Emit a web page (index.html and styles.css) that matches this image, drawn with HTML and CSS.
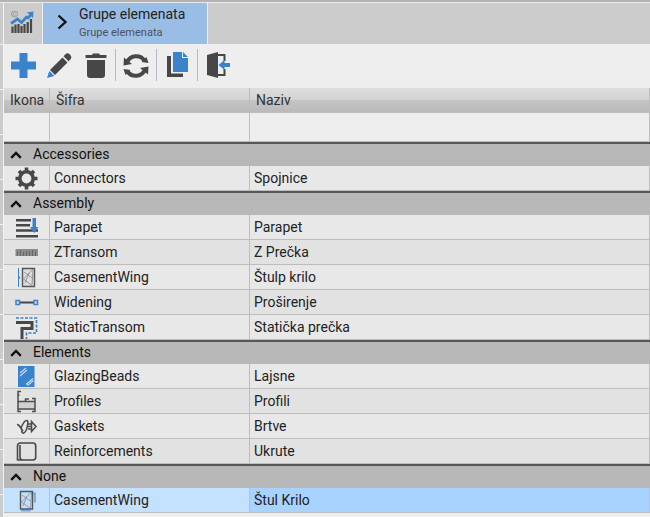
FILE: index.html
```html
<!DOCTYPE html>
<html lang="hr">
<head>
<meta charset="utf-8">
<title>Grupe elemenata</title>
<link rel="stylesheet" href="styles.css">
</head>
<body>
<div class="topline"></div>
<div class="app">
<div class="gutter"></div>
<main class="main">
<nav class="tabs">
<div class="tab home"><svg width="24" height="24" viewBox="0 0 24 24"><circle cx="4.500" cy="3" r="3" fill="none" stroke="#999" stroke-width="1"/><path d="M5.700 2.200a1.400 1.400 0 1 0 0 1.600" fill="none" stroke="#999" stroke-width=".9"/><path d="M2.500 15.500v6.500M5.500 13.500v8.500M8.500 13v9M11.500 15v7M14.500 13v9M17.700 11v11M21 8v14" stroke="#484848" stroke-width="2.200"/><path d="M1 12.500l6.500-4.500 4 3.500 5-5.500 1.500 1 4-4.500" fill="none" stroke="#3c83ca" stroke-width="2.800"/><path d="M17 1.500l6.500-1L23 7z" fill="#3c83ca"/></svg></div>
<div class="tab active"><svg width="11" height="16" viewBox="0 0 11 16"><path d="M1.500 1.500L8.500 8l-7 6.500" fill="none" stroke="#111" stroke-width="2.300"/></svg><div class="labels"><div class="title">Grupe elemenata</div><div class="sub">Grupe elemenata</div></div></div>
</nav>
<div class="toolbar">
<svg class="tool add" width="25" height="25" viewBox="0 0 25 25"><path d="M8.500 0h8v8.500H25v8h-8.500V25h-8v-8.500H0v-8h8.500z" fill="#3983cc"/></svg>
<svg class="tool edit" width="25" height="25" viewBox="0 0 25 25"><path d="M3 17L15.500 4.500l5 5L8 22z" fill="#474747"/><path d="M16.500 3.200l2-2q2-1.700 4 0l1 1q1.500 2 0 4l-2 2z" fill="#474747"/><path d="M2.300 18l5 5L0 25z" fill="#3983cc"/></svg>
<svg class="tool del" width="22" height="25" viewBox="0 0 22 25"><path d="M.5 2H7L8 .5h6L15 2h6.500v3H.5zM2 7h18v15q0 3-3 3H5q-3 0-3-3z" fill="#474747"/></svg>
<i class="sep"></i>
<svg class="tool sync" width="26" height="26" viewBox="0 0 26 26"><path d="M4 9.500A10 10 0 0 1 21.500 7.500M22 16.500A10 10 0 0 1 4.500 18.500" fill="none" stroke="#474747" stroke-width="4"/><path d="M1 4.500L.5 12.500 9 11zM25 21.500l.5-8-8.500 1.500zM18.500 9l5-5 2 6zM7.500 17l-5 5-2-6z" fill="#474747"/></svg>
<i class="sep"></i>
<svg class="tool copy" width="21" height="25" viewBox="0 0 21 25"><path d="M0 4h4v17.500h12V25H0z" fill="#474747"/><path d="M6 0h9v6h6v14H6zM16 0l5 5h-5z" fill="#3983cc"/></svg>
<i class="sep"></i>
<svg class="tool exit" width="23" height="26" viewBox="0 0 23 26"><path d="M0 3L11 0v26L0 23z" fill="#474747"/><path d="M11 3h6.500v6M17.500 17v6H11" fill="none" stroke="#474747" stroke-width="2"/><path d="M11.500 13l6-5v3H23v4h-5.500v3z" fill="#3983cc"/></svg>
</div>
<div class="grid">
<div class="row head"><div>Ikona</div><div>Šifra</div><div>Naziv</div></div>
<div class="row filter"><div></div><div></div><div></div></div>

<div class="group"><svg width="12" height="8" viewBox="0 0 12 8"><path d="M1.200 6.800L6 2l4.800 4.800"/></svg>Accessories</div>
<div class="row"><div><svg width="24" height="24" viewBox="0 0 24 24"><circle cx="11.500" cy="12.500" r="6.700" fill="none" stroke="#474747" stroke-width="3.600"/><path d="M11.500 1.500v4M11.500 19.500v4M.5 12.500h4M18.500 12.500h4M4 5l2.500 2.500M16.500 17.500L19 20M4 20l2.500-2.500M16.500 7.500L19 5" stroke="#474747" stroke-width="3.600"/></svg></div><div>Connectors</div><div>Spojnice</div></div>

<div class="group"><svg width="12" height="8" viewBox="0 0 12 8"><path d="M1.200 6.800L6 2l4.800 4.800"/></svg>Assembly</div>
<div class="row"><div><svg width="24" height="24" viewBox="0 0 24 24"><path d="M1 5.300h15M1 10.300h14M1 15.500h22M1 21.300h22" stroke="#474747" stroke-width="2.600"/><path d="M17.500 3h3.500v9h2.500L19.200 18 15 12h2.500z" fill="#3983cc"/></svg></div><div>Parapet</div><div>Parapet</div></div>
<div class="row alt"><div><svg width="24" height="24" viewBox="0 0 24 24"><path d="M.5 9h22.500v7H.5z" fill="#8b8b8b"/><path d="M2.500 11v5M5.500 10v6M8.500 12v4M11.500 11v5M14.500 11v5M17.500 10v6M20.500 11v5" stroke="#666"/></svg></div><div>ZTransom</div><div>Z Prečka</div></div>
<div class="row"><div><svg width="24" height="24" viewBox="0 0 24 24"><path d="M3.500 3v19" stroke="#3983cc"/><path d="M3 10l2.500 2.500L3 15z" fill="#3983cc"/><path d="M7.500 3.500h12v18h-12z" fill="#ddd" stroke="#555" stroke-width="1.400"/><path d="M18 4L8.500 14l8.500 6.500zM9 7l9 6.500M14 8l-4 10" fill="none" stroke="#888" stroke-width=".8"/></svg></div><div>CasementWing</div><div>Štulp krilo</div></div>
<div class="row alt"><div><svg width="24" height="24" viewBox="0 0 24 24"><path d="M4 12.500h16" stroke="#474747" stroke-width="2"/><path d="M1 10.500h3.500v4H1zM19 10.500h3.500v4H19z" fill="#ddd" stroke="#3983cc" stroke-width="1.500"/></svg></div><div>Widening</div><div>Proširenje</div></div>
<div class="row"><div><svg width="24" height="24" viewBox="0 0 24 24"><path d="M1 3h20.500v15H11.500V24" fill="none" stroke="#3983cc" stroke-width="1.700" stroke-dasharray="3 1.500"/><path d="M1 7.500h16v6H7V24" fill="none" stroke="#474747" stroke-width="3"/></svg></div><div>StaticTransom</div><div>Statička prečka</div></div>

<div class="group"><svg width="12" height="8" viewBox="0 0 12 8"><path d="M1.200 6.800L6 2l4.800 4.800"/></svg>Elements</div>
<div class="row"><div><svg width="24" height="24" viewBox="0 0 24 24"><path d="M3 2h16.500v21H3z" fill="#3983cc"/><path d="M5 9l6-5M5 12l7-6M11 20.500l7-6M12.500 21.500l6-5" stroke="#c8dbed" stroke-width="1.200"/></svg></div><div>GlazingBeads</div><div>Lajsne</div></div>
<div class="row alt"><div><svg width="24" height="24" viewBox="0 0 24 24"><path d="M3 12.500h17v8H3z" fill="#d0d0d0"/><path d="M6 2.500H3V22.500h3M3 6h1.500M17 9.500h3v13h-3M3 12.500h17M3 20h17M10.500 12v-2H14" fill="none" stroke="#4d4d4d" stroke-width="1.500"/></svg></div><div>Profiles</div><div>Profili</div></div>
<div class="row"><div><svg width="24" height="24" viewBox="0 0 24 24"><path d="M2 10.500q2 0 3.500 3L8 17.200" fill="none" stroke="#4d4d4d" stroke-width="1.700"/><path d="M6 14Q9 6.500 11.500 6.500q2 0 1.200 3.500-1 8-4 9-2 .5-2-2.500M13 10h3.500V7.500l4.500 5-4.500 5V15H13M13 12.500h3.500M16.500 10v5" fill="none" stroke="#4d4d4d" stroke-width="1.600"/></svg></div><div>Gaskets</div><div>Brtve</div></div>
<div class="row alt"><div><svg width="24" height="24" viewBox="0 0 24 24"><path d="M2.500 21.500V7q0-3 3-3H18q2.700 0 2.700 2.700V18q0 3-2.700 3H8q-3 0-3-3V6M2.500 21H8" fill="none" stroke="#474747" stroke-width="1.600"/></svg></div><div>Reinforcements</div><div>Ukrute</div></div>

<div class="group"><svg width="12" height="8" viewBox="0 0 12 8"><path d="M1.200 6.800L6 2l4.800 4.800"/></svg>None</div>
<div class="row selected"><div><svg width="24" height="24" viewBox="0 0 24 24"><path d="M18 5.500h1.800v9M6 22.500h9.500" fill="none" stroke="#70aae2" stroke-width="2"/><path d="M5.500 3.500h12v17.500h-12z" fill="#c5dff5" stroke="#555" stroke-width="1.400"/><path d="M16.500 4L6.500 14l9 6.500zM7 7l9 6.500M12 8L8 18" fill="none" stroke="#889" stroke-width=".8"/></svg></div><div>CasementWing</div><div>Štul Krilo</div></div>
</div>
</main>
</div>
</body>
</html>
```

FILE: styles.css
```css
* { box-sizing: border-box; }
body { margin: 0; height: 517px; overflow: hidden; background: #eee; font: 14px/18px Roboto, sans-serif; color: #222; }
svg { display: block; flex: none; }
.topline { height: 3px; background: #b3b3b3; border-bottom: 1px solid #eaeaea; }
.app { display: flex; height: 514px; }
.gutter { width: 4px; border-right: 1px solid #f2f2f2; background: repeating-linear-gradient(#cbcbcb 0 44px, #f2f2f2 44px 45px) 0 -3px / 100% 540px; }
.main { flex: 1; min-width: 0; }
.tabs { display: flex; height: 41px; background: #ccc; }
.tab { display: flex; border-right: 1px solid #eee; }
.home { width: 39px; padding: 8px 0 0 6px; }
.active { width: 165px; background: #9abde5; padding: 2px 0 0 14px; }
.active > svg { margin-top: 9px; }
.labels { margin-left: 11px; white-space: nowrap; }
.title { font-size: 14px; line-height: 19px; }
.sub { font-size: 11px; line-height: 17px; color: #4a525c; }
.toolbar { display: flex; height: 44px; padding: 5px 0 0 7px; align-items: flex-start; }
.tool { margin-top: 4px; }
.edit { margin-left: 11px; }
.del { margin-left: 13px; }
.sep { width: 1px; height: 32px; background: #b5bbc3; margin-left: 8px; }
.sync { margin-left: 7px; }
.sync + .sep { margin-left: 7px; }
.copy { margin-left: 10px; margin-top: 3px; }
.copy + .sep { margin-left: 9px; }
.exit { margin-left: 9px; margin-top: 3px; }
.row { display: grid; grid-template-columns: 46px 200px 400px; height: 25px; border-bottom: 1px solid #bdbdbd; background: #e8e8e8; }
.row > div { border-right: 1px solid #bdbdbd; padding: 3px 0 0 4px; overflow: hidden; white-space: nowrap; }
.row > div:first-child { padding: 0 0 0 11px; }
.alt { background: #e2e2e2; }
.head { background: linear-gradient(#dedede 0, #d4d3d3 50%, #c6c4c4 50%, #bababa 100%); }
.row.head > div { padding: 3px 0 0 6px; color: #333; }
.filter { height: 29px; background: #eee; }
.group { display: flex; align-items: center; height: 24px; border-top: 2px solid #575757; background: #b8b8b8; padding: 0 0 2px 6px; color: #111; }
.group svg { margin: 2px 11px 0 0; }
.group path { fill: none; stroke: #111; stroke-width: 2.400; }
.selected { background: #a8d2ff; }
.selected > div:nth-child(-n+2) { background: #c4e1ff; }
.selected > div { border-right-color: #b5c4d4; }
```
